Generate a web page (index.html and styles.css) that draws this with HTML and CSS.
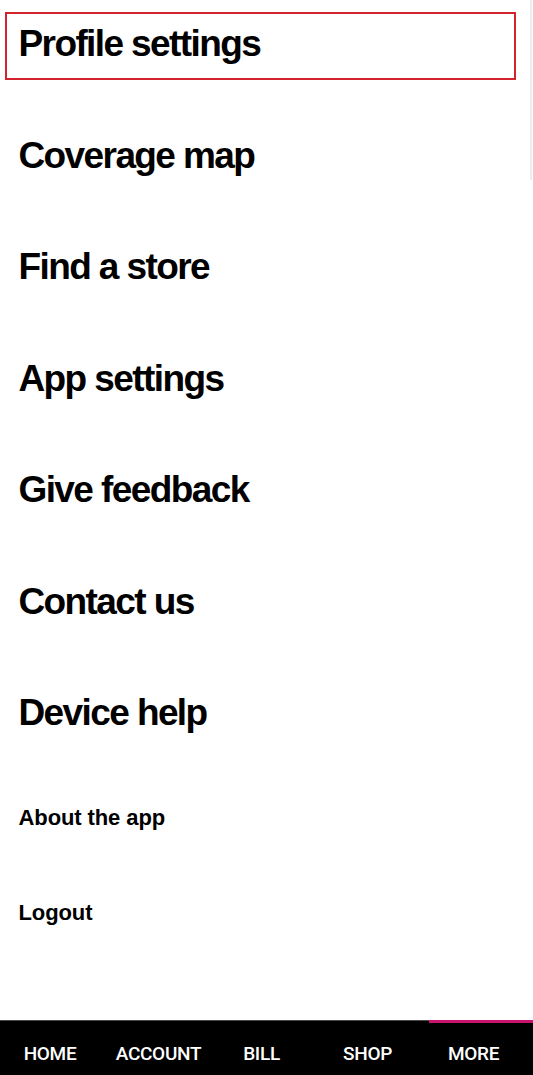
FILE: index.html
```html
<!DOCTYPE html>
<html lang="en">
<head>
<meta charset="utf-8">
<title>More</title>
<link rel="stylesheet" href="styles.css">
</head>
<body>
<div class="screen">
  <main class="menu">
    <div class="item big selected">Profile settings</div>
    <div class="item big">Coverage map</div>
    <div class="item big">Find a store</div>
    <div class="item big">App settings</div>
    <div class="item big">Give feedback</div>
    <div class="item big">Contact us</div>
    <div class="item big">Device help</div>
    <div class="item small">About the app</div>
    <div class="item small">Logout</div>
  </main>
  <div class="scrollbar"></div>
  <nav class="tabs">
    <div class="tab">HOME</div>
    <div class="tab">ACCOUNT</div>
    <div class="tab">BILL</div>
    <div class="tab">SHOP</div>
    <div class="tab active">MORE</div>
  </nav>
</div>
</body>
</html>
```

FILE: styles.css
```css
html, body {
  margin: 0;
  padding: 0;
  background: #ffffff;
}

.screen {
  position: relative;
  width: 533px;
  height: 1075px;
  display: flex;
  flex-direction: column;
  overflow: hidden;
  font-family: "Liberation Sans", Arial, sans-serif;
  color: #000;
}

.menu {
  flex: 1;
  display: flex;
  flex-direction: column;
  gap: 43.5px;
  padding: 12px 17px 0 5px;
}

.item {
  display: flex;
  align-items: center;
  box-sizing: border-box;
  padding-left: 11.5px;
  border: 2.5px solid transparent;
  font-weight: 700;
  line-height: 1;
}

.item.big {
  height: 68px;
  font-size: 37px;
  letter-spacing: -1.6px;
  padding-bottom: 5px;
}

.item.small {
  height: 52px;
  font-size: 22px;
  letter-spacing: -0.1px;
  padding-bottom: 2px;
}

.item.selected {
  border-color: #d3232f;
}

.scrollbar {
  position: absolute;
  top: 0;
  right: 1px;
  width: 2px;
  height: 180px;
  background: #ececec;
}

.tabs {
  position: relative;
  height: 54px;
  display: grid;
  grid-template-columns: 100px 117px 89px 123px 1fr;
  background: #000;
  border-top: 1px solid #4a4a4a;
}

.tab {
  display: flex;
  align-items: center;
  justify-content: center;
  padding-top: 11px;
  box-sizing: border-box;
  color: #fff;
  font-family: Roboto, "Liberation Sans", sans-serif;
  font-weight: 500;
  font-size: 19px;
  letter-spacing: -0.3px;
}

.tab.active {
  border-top: 3px solid #c8136f;
  margin-top: -1px;
  padding-top: 8px;
  padding-right: 15px;
}
```
